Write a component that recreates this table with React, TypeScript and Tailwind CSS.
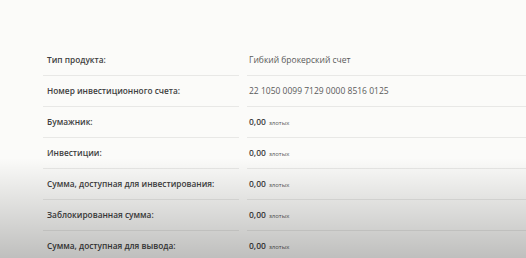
const rows: { label: string; value?: string; amount?: string }[] = [
  { label: "Тип продукта:", value: "Гибкий брокерский счет" },
  { label: "Номер инвестиционного счета:", value: "22 1050 0099 7129 0000 8516 0125" },
  { label: "Бумажник:", amount: "0,00" },
  { label: "Инвестиции:", amount: "0,00" },
  { label: "Сумма, доступная для инвестирования:", amount: "0,00" },
  { label: "Заблокированная сумма:", amount: "0,00" },
  { label: "Сумма, доступная для вывода:", amount: "0,00" },
];

export default function App() {
  return (
    <div
      className="relative h-[258px] w-[526px] overflow-hidden bg-[#fbfbf9] pt-[45px] pl-[43px]"
      style={{ fontFamily: '"Open Sans", "Noto Sans", sans-serif' }}
    >
      <div className="flex flex-col">
        {rows.map((row, i) => (
          <div key={row.label} className="flex h-[31px]">
            <div
              className={`flex w-[196px] items-center pl-1 text-[8.3px] font-semibold text-[#404040] ${
                i < rows.length - 1 ? "border-b border-[#e8e8e6]" : ""
              }`}
            >
              {row.label}
            </div>
            <div
              className={`ml-2 flex flex-1 items-center pl-[2px] text-[8.5px] text-[#5a5a5a] ${
                i < rows.length - 1 ? "border-b border-[#e8e8e6]" : ""
              }`}
            >
              {row.amount ? (
                <span className="flex items-baseline gap-[3px]">
                  <span className="font-semibold text-[#404040]">{row.amount}</span>
                  <span className="text-[6px] text-[#5a5a5a]">злотых</span>
                </span>
              ) : (
                row.value
              )}
            </div>
          </div>
        ))}
      </div>
      {/* shading toward the bottom edge */}
      <div className="pointer-events-none absolute inset-x-0 bottom-0 h-[100px] bg-gradient-to-b from-transparent to-[rgba(0,0,0,0.24)]" />
    </div>
  );
}
